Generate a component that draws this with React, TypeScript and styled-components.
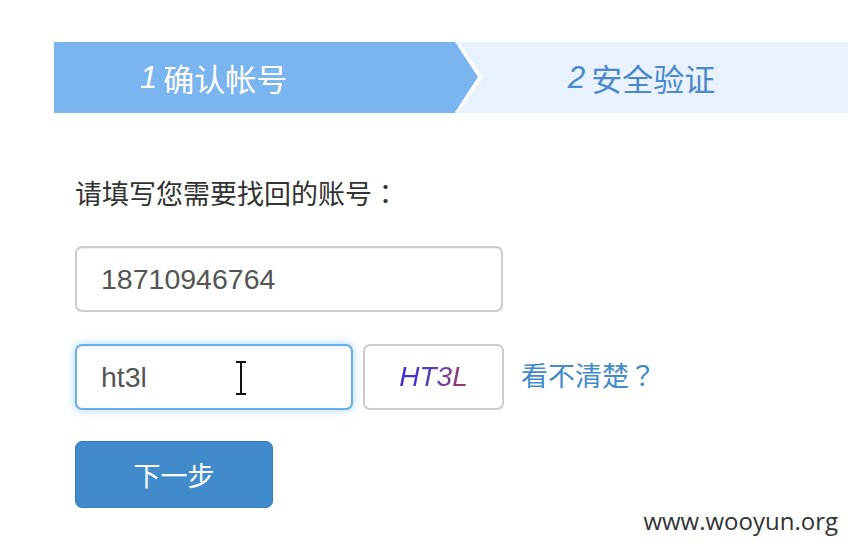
import React from "react";
import styled, { createGlobalStyle } from "styled-components";

const GlobalStyle = createGlobalStyle`
  html, body {
    margin: 0;
    padding: 0;
    background: #fff;
  }
  body {
    font-family: "Liberation Sans", Arial, "Noto Sans CJK SC", sans-serif;
  }
`;

function App() {
  return (
    <Page>
      <GlobalStyle />
      <StepBar>
        <StepActive>
          <StepNum>1</StepNum>确认帐号
        </StepActive>
        <StepNext>
          <StepNum>2</StepNum>安全验证
        </StepNext>
      </StepBar>

      <Form>
        <Label>
          请填写您需要找回的账号<Punct>：</Punct>
        </Label>
        <TextInput width={428} value="18710946764" readOnly />
        <Row>
          <FieldWrap>
            <TextInput width={278} focused value="ht3l" readOnly />
            <Cursor width="12" height="34" viewBox="0 0 12 34">
              <path d="M1 1h10M6 1v32M1 33h10" stroke="#111" strokeWidth="2" fill="none" />
            </Cursor>
          </FieldWrap>
          <Captcha>
            <CaptchaText>HT3L</CaptchaText>
          </Captcha>
          <Link href="#">
            看不清楚<Punct>？</Punct>
          </Link>
        </Row>
        <Button>下一步</Button>
      </Form>

      <Watermark>www.wooyun.org</Watermark>
    </Page>
  );
}

const Page = styled.div`
  position: relative;
  width: 848px;
  height: 550px;
  overflow: hidden;
  padding-top: 42px;
  box-sizing: border-box;
`;

const StepBar = styled.div`
  display: flex;
  margin-left: 54px;
  height: 71px;
  background: #e8f2fd;
`;

const StepActive = styled.div`
  position: relative;
  width: 401px;
  flex-shrink: 0;
  background: #7bb5f0;
  color: #fff;
  display: flex;
  align-items: center;
  padding-left: 86px;
  box-sizing: border-box;
  font-size: 31px;
  font-family: "Liberation Sans", "Noto Sans CJK SC", sans-serif;

  &::before {
    content: "";
    position: absolute;
    top: 0;
    left: 100%;
    border-top: 35.5px solid transparent;
    border-bottom: 35.5px solid transparent;
    border-left: 24px solid #fff;
    transform: translateX(4px);
  }

  &::after {
    content: "";
    position: absolute;
    top: 0;
    left: 100%;
    border-top: 35.5px solid transparent;
    border-bottom: 35.5px solid transparent;
    border-left: 23px solid #7bb5f0;
  }
`;

const StepNext = styled.div`
  flex: 1;
  display: flex;
  align-items: center;
  padding-left: 113px;
  color: #4b87cb;
  font-size: 31px;
  font-family: "Liberation Sans", "Noto Sans CJK SC", sans-serif;
`;

const StepNum = styled.span`
  font-style: italic;
  margin-right: 6px;
`;

const Form = styled.div`
  padding-left: 75px;
  padding-top: 63px;
  display: flex;
  flex-direction: column;
  align-items: flex-start;
`;

const Label = styled.div`
  color: #333;
  font-size: 27px;
  height: 38px;
  line-height: 38px;
  margin-bottom: 32px;
`;

const Punct = styled.span`
  font-family: "Noto Sans CJK TC", sans-serif;
  line-height: 1;
`;

const TextInput = styled.input<{ width: number; focused?: boolean }>`
  width: ${(p) => p.width}px;
  height: 66px;
  box-sizing: border-box;
  padding: 0 24px;
  border: 2px solid ${(p) => (p.focused ? "#66afe9" : "#ccc")};
  border-radius: 7px;
  font-family: "Liberation Sans", Arial, sans-serif;
  font-size: 28.5px;
  color: #555;
  background: #fff;
  outline: none;
  box-shadow: ${(p) =>
    p.focused
      ? "inset 0 1px 1px rgba(0,0,0,.075), 0 0 10px rgba(102,175,233,.55)"
      : "inset 0 1px 1px rgba(0,0,0,.075)"};
`;

const Row = styled.div`
  display: flex;
  align-items: center;
  margin-top: 32px;
`;

const FieldWrap = styled.div`
  position: relative;
  display: flex;
`;

const Cursor = styled.svg`
  position: absolute;
  left: 160px;
  top: 17px;
`;

const Captcha = styled.div`
  width: 141px;
  height: 66px;
  box-sizing: border-box;
  margin-left: 10px;
  border: 2px solid #ccc;
  border-radius: 7px;
  display: flex;
  align-items: center;
  justify-content: center;
`;

const CaptchaText = styled.span`
  font-family: "Liberation Sans", Arial, sans-serif;
  font-style: italic;
  font-size: 28px;
  background: linear-gradient(90deg, #3a2fd6 0%, #5a3fb8 50%, #a03a5a 100%);
  -webkit-background-clip: text;
  background-clip: text;
  color: transparent;
`;

const Link = styled.a`
  margin-left: 17px;
  color: #428bca;
  font-size: 27px;
  line-height: 38px;
  text-decoration: none;
`;

const Button = styled.button`
  margin-top: 31px;
  width: 198px;
  height: 67px;
  border: 1px solid #357ebd;
  border-radius: 7px;
  background: #428bca;
  color: #fff;
  font-size: 27px;
  font-family: "Liberation Sans", "Noto Sans CJK SC", sans-serif;
`;

const Watermark = styled.div`
  position: absolute;
  right: 10px;
  bottom: 13px;
  font-family: "Open Sans", sans-serif;
  font-size: 24px;
  color: #333;
`;

export default App;
